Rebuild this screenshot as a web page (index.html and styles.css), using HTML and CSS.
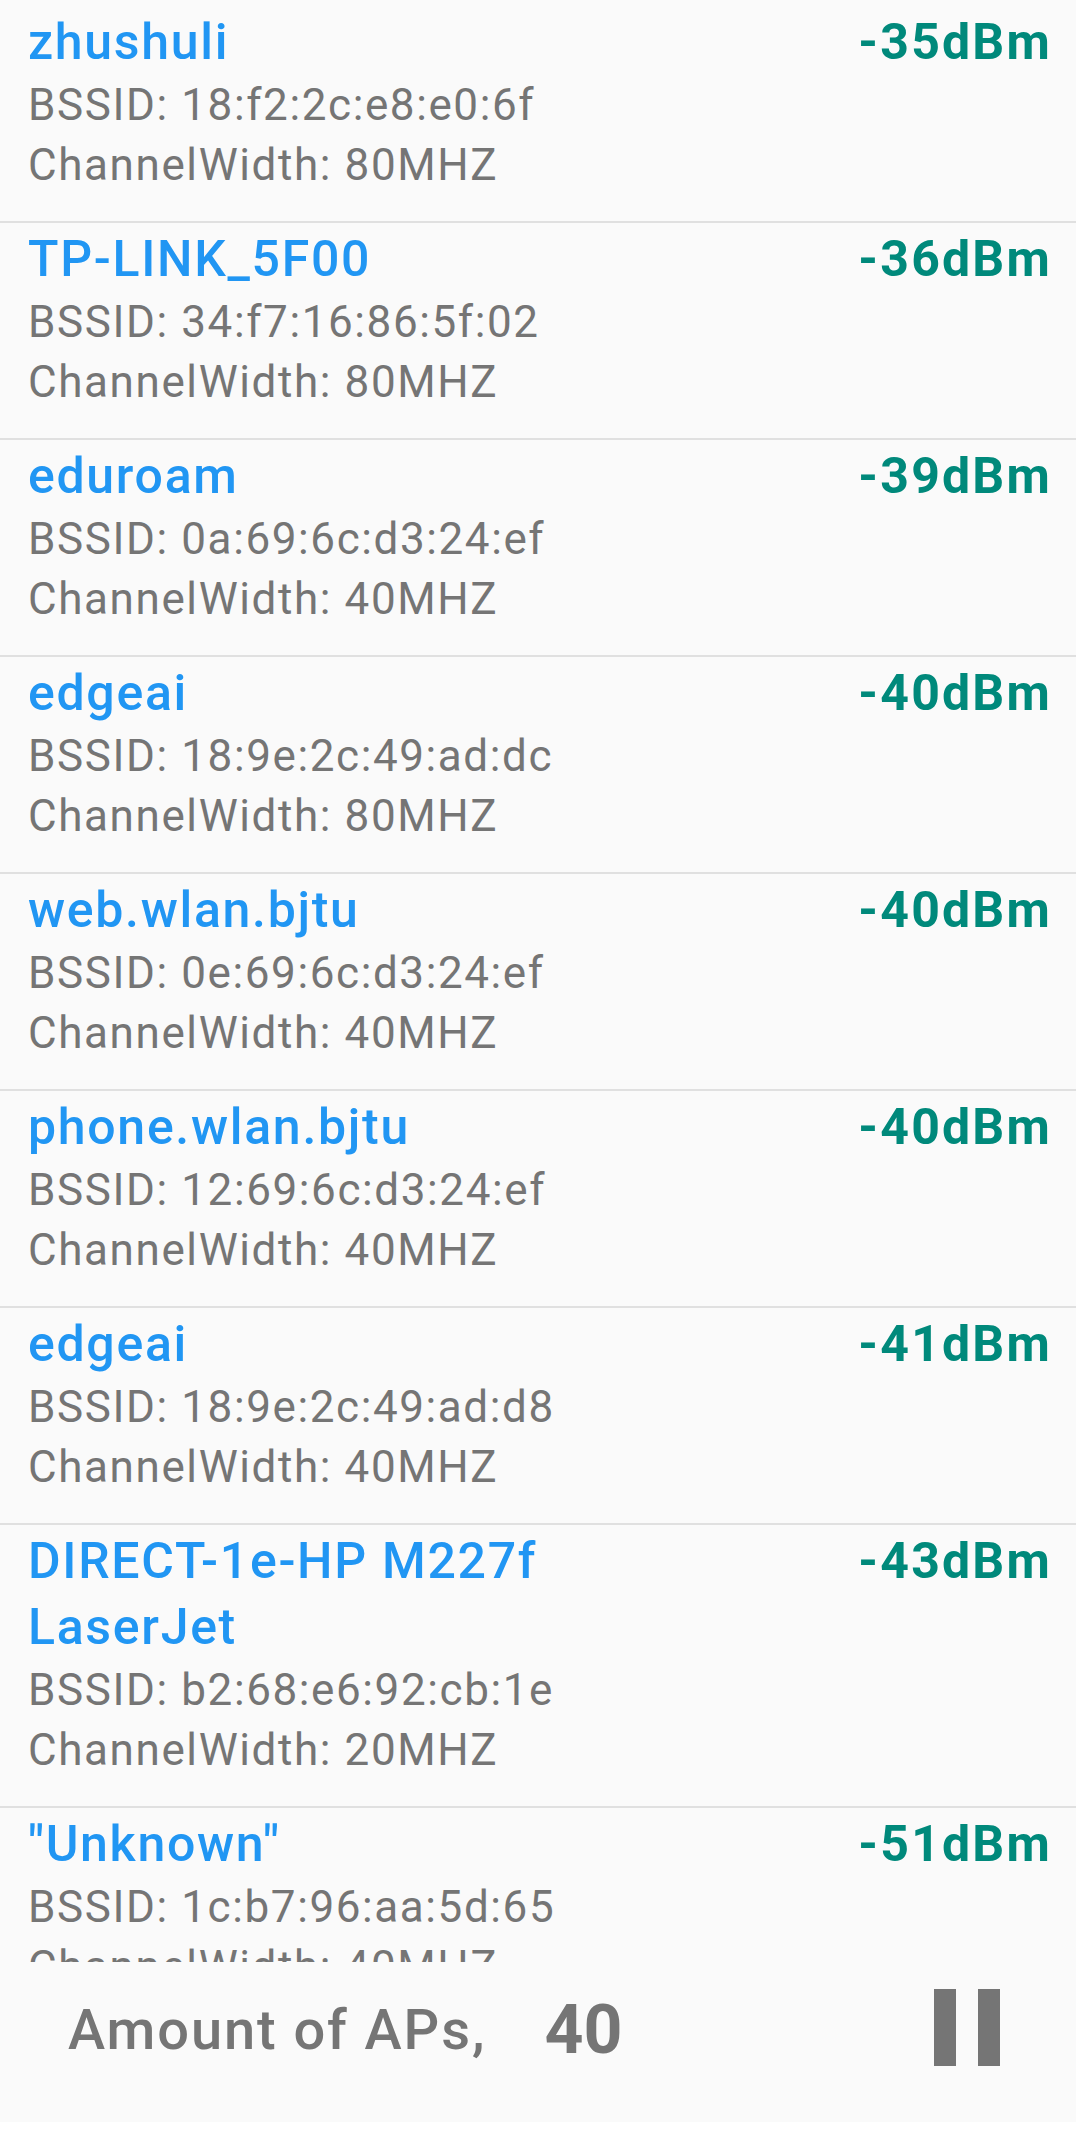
FILE: index.html
```html
<!DOCTYPE html>
<html lang="en">
<head>
<meta charset="utf-8">
<title>WiFi Scanner</title>
<link rel="stylesheet" href="styles.css">
</head>
<body>
<div class="screen">
  <div class="list">
    <div class="ap">
      <div class="info">
        <div class="ssid">zhushuli</div>
        <div class="detail">BSSID: 18:f2:2c:e8:e0:6f</div>
        <div class="detail">ChannelWidth: 80MHZ</div>
      </div>
      <div class="rssi">-35dBm</div>
    </div>
    <div class="ap">
      <div class="info">
        <div class="ssid">TP-LINK_5F00</div>
        <div class="detail">BSSID: 34:f7:16:86:5f:02</div>
        <div class="detail">ChannelWidth: 80MHZ</div>
      </div>
      <div class="rssi">-36dBm</div>
    </div>
    <div class="ap">
      <div class="info">
        <div class="ssid">eduroam</div>
        <div class="detail">BSSID: 0a:69:6c:d3:24:ef</div>
        <div class="detail">ChannelWidth: 40MHZ</div>
      </div>
      <div class="rssi">-39dBm</div>
    </div>
    <div class="ap">
      <div class="info">
        <div class="ssid">edgeai</div>
        <div class="detail">BSSID: 18:9e:2c:49:ad:dc</div>
        <div class="detail">ChannelWidth: 80MHZ</div>
      </div>
      <div class="rssi">-40dBm</div>
    </div>
    <div class="ap">
      <div class="info">
        <div class="ssid">web.wlan.bjtu</div>
        <div class="detail">BSSID: 0e:69:6c:d3:24:ef</div>
        <div class="detail">ChannelWidth: 40MHZ</div>
      </div>
      <div class="rssi">-40dBm</div>
    </div>
    <div class="ap">
      <div class="info">
        <div class="ssid">phone.wlan.bjtu</div>
        <div class="detail">BSSID: 12:69:6c:d3:24:ef</div>
        <div class="detail">ChannelWidth: 40MHZ</div>
      </div>
      <div class="rssi">-40dBm</div>
    </div>
    <div class="ap">
      <div class="info">
        <div class="ssid">edgeai</div>
        <div class="detail">BSSID: 18:9e:2c:49:ad:d8</div>
        <div class="detail">ChannelWidth: 40MHZ</div>
      </div>
      <div class="rssi">-41dBm</div>
    </div>
    <div class="ap">
      <div class="info">
        <div class="ssid">DIRECT-1e-HP M227f LaserJet</div>
        <div class="detail">BSSID: b2:68:e6:92:cb:1e</div>
        <div class="detail">ChannelWidth: 20MHZ</div>
      </div>
      <div class="rssi">-43dBm</div>
    </div>
    <div class="ap">
      <div class="info">
        <div class="ssid">"Unknown"</div>
        <div class="detail">BSSID: 1c:b7:96:aa:5d:65</div>
        <div class="detail">ChannelWidth: 40MHZ</div>
      </div>
      <div class="rssi">-51dBm</div>
    </div>
  </div>
  <div class="bar">
    <div class="count">
      <span class="count-label">Amount of APs,</span>
      <span class="count-num">40</span>
    </div>
    <div class="pause" aria-label="pause">
      <span class="pbar"></span>
      <span class="pbar"></span>
    </div>
  </div>
  <div class="navpad"></div>
</div>
</body>
</html>
```

FILE: styles.css
```css
html, body {
  margin: 0;
  padding: 0;
  background: #ffffff;
}

body {
  font-family: Roboto, "Noto Sans", "Liberation Sans", sans-serif;
}

.screen {
  width: 1076px;
  height: 2138px;
  display: flex;
  flex-direction: column;
}

.list {
  height: 1962px;
  overflow: hidden;
  background: #fafafa;
  padding-top: 6px;
  box-sizing: border-box;
  flex: none;
}

.ap {
  display: flex;
  justify-content: space-between;
  align-items: baseline;
  padding: 3px 24px 26px 28px;
  border-bottom: 2px solid #e0e0e0;
}

.info {
  flex: 0 1 640px;
  min-width: 0;
}

.ssid {
  color: #2196f3;
  font-size: 50px;
  font-weight: 500;
  line-height: 66px;
  letter-spacing: 1.7px;
}

.detail {
  color: #757575;
  font-size: 44px;
  line-height: 60px;
  letter-spacing: 1.6px;
  white-space: nowrap;
}

.rssi {
  color: #00897b;
  font-size: 50px;
  font-weight: 700;
  line-height: 66px;
  letter-spacing: 2.2px;
  white-space: nowrap;
}

.bar {
  height: 160px;
  flex: none;
  background: #fafafa;
  display: flex;
  justify-content: space-between;
  align-items: flex-start;
  padding: 0 76px 0 68px;
  box-sizing: border-box;
}

.count {
  display: flex;
  align-items: center;
  gap: 58px;
  margin-top: 34px;
  color: #757575;
}

.count-label {
  font-size: 56px;
  line-height: 56px;
  font-weight: 500;
  letter-spacing: 1.9px;
}

.count-num {
  font-size: 68px;
  line-height: 68px;
  font-weight: 700;
}

.pause {
  display: flex;
  gap: 22px;
  margin-top: 27px;
}

.pbar {
  display: block;
  width: 22px;
  height: 77px;
  background: #757575;
}

.navpad {
  flex: 1;
  background: #ffffff;
}
```
